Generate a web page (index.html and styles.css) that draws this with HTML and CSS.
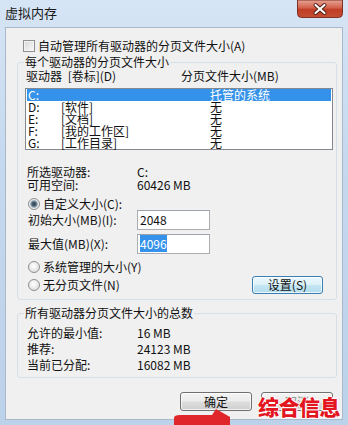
FILE: index.html
```html
<!DOCTYPE html>
<html lang="zh-CN">
<head>
    <meta charset="UTF-8">
    <meta name="viewport" content="width=device-width, initial-scale=1.0">
    <title>虚拟内存</title>
    <link rel="stylesheet" href="styles.css">
</head>
<body>
    <div class="window">
        <div class="titlebar">
            <span class="title">虚拟内存</span>
            <div class="close-btn">
                <svg width="46" height="18" viewBox="0 0 46 18">
                    <defs>
                        <linearGradient id="closeGrad" x1="0" y1="0" x2="0" y2="1">
                            <stop offset="0" stop-color="#e6a596"/>
                            <stop offset="0.45" stop-color="#d2604a"/>
                            <stop offset="0.55" stop-color="#c03d25"/>
                            <stop offset="1" stop-color="#c24f35"/>
                        </linearGradient>
                    </defs>
                    <path d="M0.5 0 H45.5 V13.5 Q45.5 17.5 41.5 17.5 H4.5 Q0.5 17.5 0.5 13.5 Z" fill="url(#closeGrad)" stroke="#7e3024"/>
                    <path d="M18.5 5 L27.5 13 M27.5 5 L18.5 13" stroke="#4d1a12" stroke-width="4" stroke-linecap="round"/>
                    <path d="M18.5 5 L27.5 13 M27.5 5 L18.5 13" stroke="#ffffff" stroke-width="2.2" stroke-linecap="round"/>
                </svg>
            </div>
        </div>

        <div class="client">
            <div class="check-row"><span class="checkbox"></span>自动管理所有驱动器的分页文件大小(A)</div>

            <fieldset class="group group-drives">
                <legend>每个驱动器的分页文件大小</legend>
                <div class="list-head">
                    <span class="col-drive">驱动器 [卷标](D)</span>
                    <span>分页文件大小(MB)</span>
                </div>
                <div class="listbox">
                    <div class="list-row selected"><span class="drv">C:</span><span class="vol"></span><span>托管的系统</span></div>
                    <div class="list-row"><span class="drv">D:</span><span class="vol">[软件]</span><span>无</span></div>
                    <div class="list-row"><span class="drv">E:</span><span class="vol">[文档]</span><span>无</span></div>
                    <div class="list-row"><span class="drv">F:</span><span class="vol">[我的工作区]</span><span>无</span></div>
                    <div class="list-row"><span class="drv">G:</span><span class="vol">[工作目录]</span><span>无</span></div>
                </div>

                <div class="info-grid">
                    <span>所选驱动器:</span><span>C:</span>
                    <span>可用空间:</span><span>60426 MB</span>
                </div>

                <div class="radio-row"><span class="radio checked"></span>自定义大小(C):</div>
                <div class="field-row">
                    <span class="field-label">初始大小(MB)(I):</span>
                    <span class="textbox">2048</span>
                </div>
                <div class="field-row second">
                    <span class="field-label">最大值(MB)(X):</span>
                    <span class="textbox"><span class="text-sel">4096</span></span>
                </div>
                <div class="radio-row"><span class="radio"></span>系统管理的大小(Y)</div>
                <div class="radio-row with-btn"><span class="radio"></span>无分页文件(N)<button class="btn btn-hot">设置(S)</button></div>
            </fieldset>

            <fieldset class="group group-total">
                <legend>所有驱动器分页文件大小的总数</legend>
                <div class="total-grid">
                    <span>允许的最小值:</span><span>16 MB</span>
                    <span>推荐:</span><span>24123 MB</span>
                    <span>当前已分配:</span><span>16082 MB</span>
                </div>
            </fieldset>

            <div class="dialog-buttons">
                <button class="btn">确定</button>
                <button class="btn btn-under">取消</button>
            </div>
        </div>

        <!-- watermark and arrow lie over the dialog -->
        <div class="watermark">综合信息</div>
        <svg class="arrow-tail" width="60" height="22" viewBox="0 0 60 22">
            <path d="M2 13 Q2 10 8 10 L40 10 L44 4 L58 12 L58 22 L2 22 Z" fill="#e0262a"/>
        </svg>
    </div>
</body>
</html>
```

FILE: styles.css
```css
body {
    margin: 0;
    font-family: "Noto Sans CJK SC", "Noto Sans", sans-serif;
    font-size: 12px;
    color: #111;
}
.window {
    position: relative;
    width: 348px;
    height: 425px;
    overflow: hidden;
    background: linear-gradient(180deg, #d6e5f5 0%, #c4d8ee 40%, #bcd2ea 100%);
}
.titlebar {
    display: flex;
    align-items: flex-start;
    height: 27px;
}
.title {
    margin: 6px 0 0 5px;
    font-size: 13px;
    line-height: 14px;
    color: #1a1a1a;
}
.close-btn {
    margin-left: auto;
    margin-right: 5px;
    height: 18px;
}
.close-btn svg {
    display: block;
}
.client {
    box-sizing: border-box;
    height: 393px;
    margin: 0 5px;
    padding-top: 11px;
    background-color: #f0f0f0;
    border: 1px solid #a9b8ca;
}
.check-row {
    display: flex;
    align-items: center;
    height: 14px;
    line-height: 14px;
    margin-left: 17px;
}
.checkbox {
    box-sizing: border-box;
    width: 12px;
    height: 12px;
    margin-right: 3px;
    border: 1px solid #8e8f8f;
    background: linear-gradient(135deg, #d6d6d6, #fbfbfb);
    box-shadow: inset 0 0 0 1px #f4f4f4;
}
.group {
    min-width: 0;
    margin: 2px 5px 0 11px;
    padding: 0 3px 5px 8px;
    border: 1px solid #d5dfe5;
    border-radius: 3px;
}
.group legend {
    padding: 0 1px;
    margin-left: -2px;
    line-height: 14px;
}
.list-head {
    display: flex;
    height: 14px;
    line-height: 14px;
}
.col-drive {
    width: 155px;
    word-spacing: 3px;
}
.listbox {
    margin: 5px 0 0 -1px;
    border: 1px solid #828790;
    background-color: #fff;
}
.list-row {
    display: flex;
    height: 12px;
    line-height: 12px;
    margin: 0 1px;
    padding-left: 1px;
}
.list-row.selected {
    background-color: #3592ea;
    color: #fff;
}
.drv {
    width: 33px;
}
.vol {
    width: 149px;
}
.info-grid,
.total-grid {
    display: grid;
    grid-template-columns: 110px 1fr;
    margin-left: 1px;
}
.info-grid {
    margin-top: 15px;
    line-height: 13px;
}
.total-grid {
    margin-top: 5px;
    line-height: 16px;
}
.radio-row {
    display: flex;
    align-items: center;
    height: 12px;
    line-height: 12px;
    margin-top: 7px;
}
.radio-row.with-btn {
    height: 18px;
    margin-top: 3px;
}
.radio {
    box-sizing: border-box;
    width: 12px;
    height: 12px;
    margin: 0 3px 0 2px;
    border: 1px solid #8e8f8f;
    border-radius: 50%;
    background: radial-gradient(circle at 45% 40%, #ffffff 0, #e6e6e6 60%, #d0d0d0 100%);
}
.radio.checked {
    background: radial-gradient(circle at 50% 50%, #2f3d46 0, #50667a 2.2px, #9fb0bd 3.4px, #eeeeee 4.5px, #dcdcdc 100%);
}
.field-row {
    display: flex;
    align-items: center;
    height: 20px;
}
.field-row.second {
    margin-top: 4px;
}
.field-label {
    width: 109px;
    margin-left: 2px;
    line-height: 14px;
}
.textbox {
    box-sizing: border-box;
    width: 73px;
    height: 20px;
    padding: 2px 0 0 2px;
    line-height: 14px;
    border: 1px solid #abadb3;
    border-top-color: #9da3ad;
    background-color: #fff;
}
.text-sel {
    background-color: #3592ea;
    color: #fff;
}
.btn {
    box-sizing: border-box;
    width: 72px;
    height: 19px;
    padding: 0;
    font: inherit;
    line-height: 16px;
    color: #111;
    border: 1px solid #707070;
    border-radius: 3px;
    background: linear-gradient(180deg, #f4f4f4 0%, #ececec 48%, #dddddd 52%, #cfcfcf 100%);
    box-shadow: inset 0 0 0 1px rgba(255, 255, 255, 0.7);
}
.btn-hot {
    width: 71px;
    height: 18px;
    margin-left: auto;
    margin-right: 10px;
    border-color: #3c7fb1;
    background: linear-gradient(180deg, #eef8fc 0%, #dcf1f9 48%, #c4e6f3 52%, #b2dcee 100%);
}
.btn-under {
    color: #888;
}
.group-total {
    margin-top: 6px;
    padding-bottom: 4px;
}
.dialog-buttons {
    display: flex;
    justify-content: flex-end;
    gap: 9px;
    margin-top: 14px;
    padding-right: 9px;
}
.watermark {
    position: absolute;
    left: 258px;
    top: 395px;
    font-size: 21px;
    font-weight: 900;
    line-height: 22px;
    letter-spacing: -0.5px;
    color: #e3161f;
    text-shadow: 1px 0 #fff, -1px 0 #fff, 0 1px #fff, 0 -1px #fff;
}
.arrow-tail {
    position: absolute;
    left: 172px;
    top: 405px;
}
```
